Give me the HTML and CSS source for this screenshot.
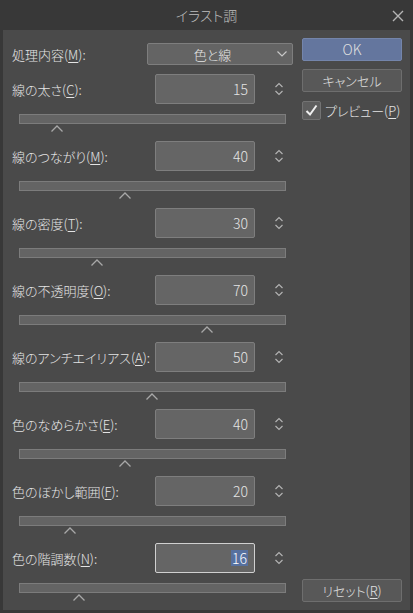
FILE: index.html
```html
<!DOCTYPE html>
<html lang="ja">
<head>
    <meta charset="UTF-8">
    <meta name="viewport" content="width=device-width, initial-scale=1.0">
    <title>イラスト調</title>
    <link rel="stylesheet" href="styles.css">
</head>
<body>
    <div class="window">
        <div class="titlebar">
            <span></span>
            <span class="title">イラスト調</span>
            <svg class="close" width="12" height="12" viewBox="0 0 12 12">
                <path d="M1 1L11 11M11 1L1 11" stroke="#b4b4b4" stroke-width="1.4" fill="none"/>
            </svg>
        </div>
        <div class="panel">
            <div class="settings">
                <div class="mode-row">
                    <span class="label">処理内容(<u>M</u>):</span>
                    <div class="select">
                        <span class="select-text">色と線</span>
                        <svg width="10" height="6" viewBox="0 0 10 6">
                            <polyline points="0.5,0.5 5,5 9.5,0.5" stroke="#c8c8c8" stroke-width="1.2" fill="none"/>
                        </svg>
                    </div>
                </div>

                <div class="param">
                    <div class="param-top">
                        <span class="label">線の太さ(<u>C</u>):</span>
                        <div class="num">15</div>
                        <div class="spin"><svg width="8" height="14" viewBox="0 0 8 14"><polyline points="0.5,5 4,1.5 7.5,5" /><polyline points="0.5,9 4,12.5 7.5,9" /></svg></div>
                    </div>
                    <div class="track"></div>
                    <div class="thumb-lane"><svg class="thumb" style="left:32px" width="12" height="7" viewBox="0 0 12 7"><polyline points="0.5,6.5 6,1 11.5,6.5" /></svg></div>
                </div>

                <div class="param">
                    <div class="param-top">
                        <span class="label">線のつながり(<u>M</u>):</span>
                        <div class="num">40</div>
                        <div class="spin"><svg width="8" height="14" viewBox="0 0 8 14"><polyline points="0.5,5 4,1.5 7.5,5" /><polyline points="0.5,9 4,12.5 7.5,9" /></svg></div>
                    </div>
                    <div class="track"></div>
                    <div class="thumb-lane"><svg class="thumb" style="left:100px" width="12" height="7" viewBox="0 0 12 7"><polyline points="0.5,6.5 6,1 11.5,6.5" /></svg></div>
                </div>

                <div class="param">
                    <div class="param-top">
                        <span class="label">線の密度(<u>T</u>):</span>
                        <div class="num">30</div>
                        <div class="spin"><svg width="8" height="14" viewBox="0 0 8 14"><polyline points="0.5,5 4,1.5 7.5,5" /><polyline points="0.5,9 4,12.5 7.5,9" /></svg></div>
                    </div>
                    <div class="track"></div>
                    <div class="thumb-lane"><svg class="thumb" style="left:72px" width="12" height="7" viewBox="0 0 12 7"><polyline points="0.5,6.5 6,1 11.5,6.5" /></svg></div>
                </div>

                <div class="param">
                    <div class="param-top">
                        <span class="label">線の不透明度(<u>O</u>):</span>
                        <div class="num">70</div>
                        <div class="spin"><svg width="8" height="14" viewBox="0 0 8 14"><polyline points="0.5,5 4,1.5 7.5,5" /><polyline points="0.5,9 4,12.5 7.5,9" /></svg></div>
                    </div>
                    <div class="track"></div>
                    <div class="thumb-lane"><svg class="thumb" style="left:182px" width="12" height="7" viewBox="0 0 12 7"><polyline points="0.5,6.5 6,1 11.5,6.5" /></svg></div>
                </div>

                <div class="param">
                    <div class="param-top">
                        <span class="label">線のアンチエイリアス(<u>A</u>):</span>
                        <div class="num">50</div>
                        <div class="spin"><svg width="8" height="14" viewBox="0 0 8 14"><polyline points="0.5,5 4,1.5 7.5,5" /><polyline points="0.5,9 4,12.5 7.5,9" /></svg></div>
                    </div>
                    <div class="track"></div>
                    <div class="thumb-lane"><svg class="thumb" style="left:127px" width="12" height="7" viewBox="0 0 12 7"><polyline points="0.5,6.5 6,1 11.5,6.5" /></svg></div>
                </div>

                <div class="param">
                    <div class="param-top">
                        <span class="label">色のなめらかさ(<u>E</u>):</span>
                        <div class="num">40</div>
                        <div class="spin"><svg width="8" height="14" viewBox="0 0 8 14"><polyline points="0.5,5 4,1.5 7.5,5" /><polyline points="0.5,9 4,12.5 7.5,9" /></svg></div>
                    </div>
                    <div class="track"></div>
                    <div class="thumb-lane"><svg class="thumb" style="left:100px" width="12" height="7" viewBox="0 0 12 7"><polyline points="0.5,6.5 6,1 11.5,6.5" /></svg></div>
                </div>

                <div class="param">
                    <div class="param-top">
                        <span class="label">色のぼかし範囲(<u>F</u>):</span>
                        <div class="num">20</div>
                        <div class="spin"><svg width="8" height="14" viewBox="0 0 8 14"><polyline points="0.5,5 4,1.5 7.5,5" /><polyline points="0.5,9 4,12.5 7.5,9" /></svg></div>
                    </div>
                    <div class="track"></div>
                    <div class="thumb-lane"><svg class="thumb" style="left:45px" width="12" height="7" viewBox="0 0 12 7"><polyline points="0.5,6.5 6,1 11.5,6.5" /></svg></div>
                </div>

                <div class="param">
                    <div class="param-top">
                        <span class="label">色の階調数(<u>N</u>):</span>
                        <div class="num focused"><span class="selected">16</span></div>
                        <div class="spin"><svg width="8" height="14" viewBox="0 0 8 14"><polyline points="0.5,5 4,1.5 7.5,5" /><polyline points="0.5,9 4,12.5 7.5,9" /></svg></div>
                    </div>
                    <div class="track"></div>
                    <div class="thumb-lane"><svg class="thumb" style="left:54px" width="12" height="7" viewBox="0 0 12 7"><polyline points="0.5,6.5 6,1 11.5,6.5" /></svg></div>
                </div>
            </div>

            <div class="actions">
                <button class="btn primary">OK</button>
                <button class="btn">キャンセル</button>
                <div class="check">
                    <span class="box">
                        <svg width="17" height="17" viewBox="0 0 17 17">
                            <polyline points="3.5,9 7,12.5 13.5,3.5" stroke="#f0f0f0" stroke-width="2" fill="none"/>
                        </svg>
                    </span>
                    <span>プレビュー(<u>P</u>)</span>
                </div>
                <div class="spacer"></div>
                <button class="btn">リセット(<u>R</u>)</button>
            </div>
        </div>
    </div>
</body>
</html>
```

FILE: styles.css
```css
body {
    margin: 0;
    background-color: #383838;
    font-family: "Noto Sans CJK JP", "Noto Sans", sans-serif;
    font-size: 13px;
    font-weight: 300;
    font-feature-settings: "palt";
    color: #e4e4e4;
}
u {
    text-underline-offset: 2px;
    text-decoration-thickness: 1px;
}
.window {
    width: 413px;
    height: 613px;
    background-color: #383838;
}
.titlebar {
    height: 30px;
    display: grid;
    grid-template-columns: 1fr auto 1fr;
    align-items: center;
}
.title {
    color: #bebebe;
    font-size: 14px;
    line-height: 30px;
}
.close {
    justify-self: end;
    margin-right: 9px;
    margin-top: 1px;
}
.panel {
    margin: 0 3px;
    height: 580px;
    background-color: #4a4a4a;
    display: flex;
    padding: 8px 8px 0 9px;
    box-sizing: border-box;
}
.settings {
    width: 281px;
    padding-top: 5px;
}
.mode-row {
    height: 22px;
    display: flex;
    align-items: center;
}
.label {
    flex: 1;
    white-space: nowrap;
}
.select {
    width: 146px;
    height: 22px;
    flex-shrink: 0;
    box-sizing: border-box;
    background-color: #646464;
    border: 1px solid #7e7e7e;
    border-radius: 2px;
    display: flex;
    align-items: center;
    padding-right: 5px;
}
.select-text {
    flex: 1;
    text-align: center;
}
.param {
    height: 67px;
}
.mode-row + .param {
    margin-top: 9px;
}
.param-top {
    height: 30px;
    display: flex;
    align-items: center;
}
.num {
    width: 100px;
    height: 30px;
    flex-shrink: 0;
    box-sizing: border-box;
    background-color: #656565;
    border: 1px solid #7e7e7e;
    border-radius: 2px;
    text-align: right;
    padding-right: 6px;
    font-size: 14px;
    line-height: 28px;
}
.num.focused {
    border-color: #d0d0d0;
}
.selected {
    background-color: #56709f;
    color: #ffffff;
    padding: 0 1px;
    line-height: 16px;
    display: inline-block;
}
.spin {
    width: 38px;
    flex-shrink: 0;
    padding-left: 20px;
    box-sizing: border-box;
    display: flex;
    align-items: center;
}
.spin polyline {
    stroke: #b2b2b2;
    stroke-width: 1.2;
    fill: none;
}
.track {
    margin: 10px 0 0 7px;
    width: 267px;
    height: 10px;
    box-sizing: border-box;
    background-color: #646464;
    border: 1px solid #7c7c7c;
}
.thumb-lane {
    position: relative;
    margin-left: 7px;
    width: 267px;
    height: 17px;
}
.thumb {
    position: absolute;
    top: 1px;
}
.thumb polyline {
    stroke: #a8a8a8;
    stroke-width: 1.3;
    fill: none;
}
.actions {
    width: 100px;
    margin-left: 9px;
    display: flex;
    flex-direction: column;
    padding-bottom: 8px;
}
.btn {
    height: 23px;
    padding: 0;
    font: inherit;
    color: #e0e0e0;
    background-color: #585858;
    border: 1px solid #6e6e6e;
    border-radius: 2px;
    line-height: 21px;
}
.btn + .btn {
    margin-top: 8px;
}
.btn.primary {
    font-size: 14px;
    background-color: #64769e;
    border-color: #7485ab;
}
.check {
    margin-top: 8px;
    height: 20px;
    display: flex;
    align-items: center;
    gap: 4px;
    white-space: nowrap;
}
.box {
    width: 19px;
    height: 19px;
    box-sizing: border-box;
    background-color: #5e5e5e;
    border: 1px solid #737373;
    border-radius: 2px;
    display: flex;
}
.spacer {
    flex: 1;
}
```
